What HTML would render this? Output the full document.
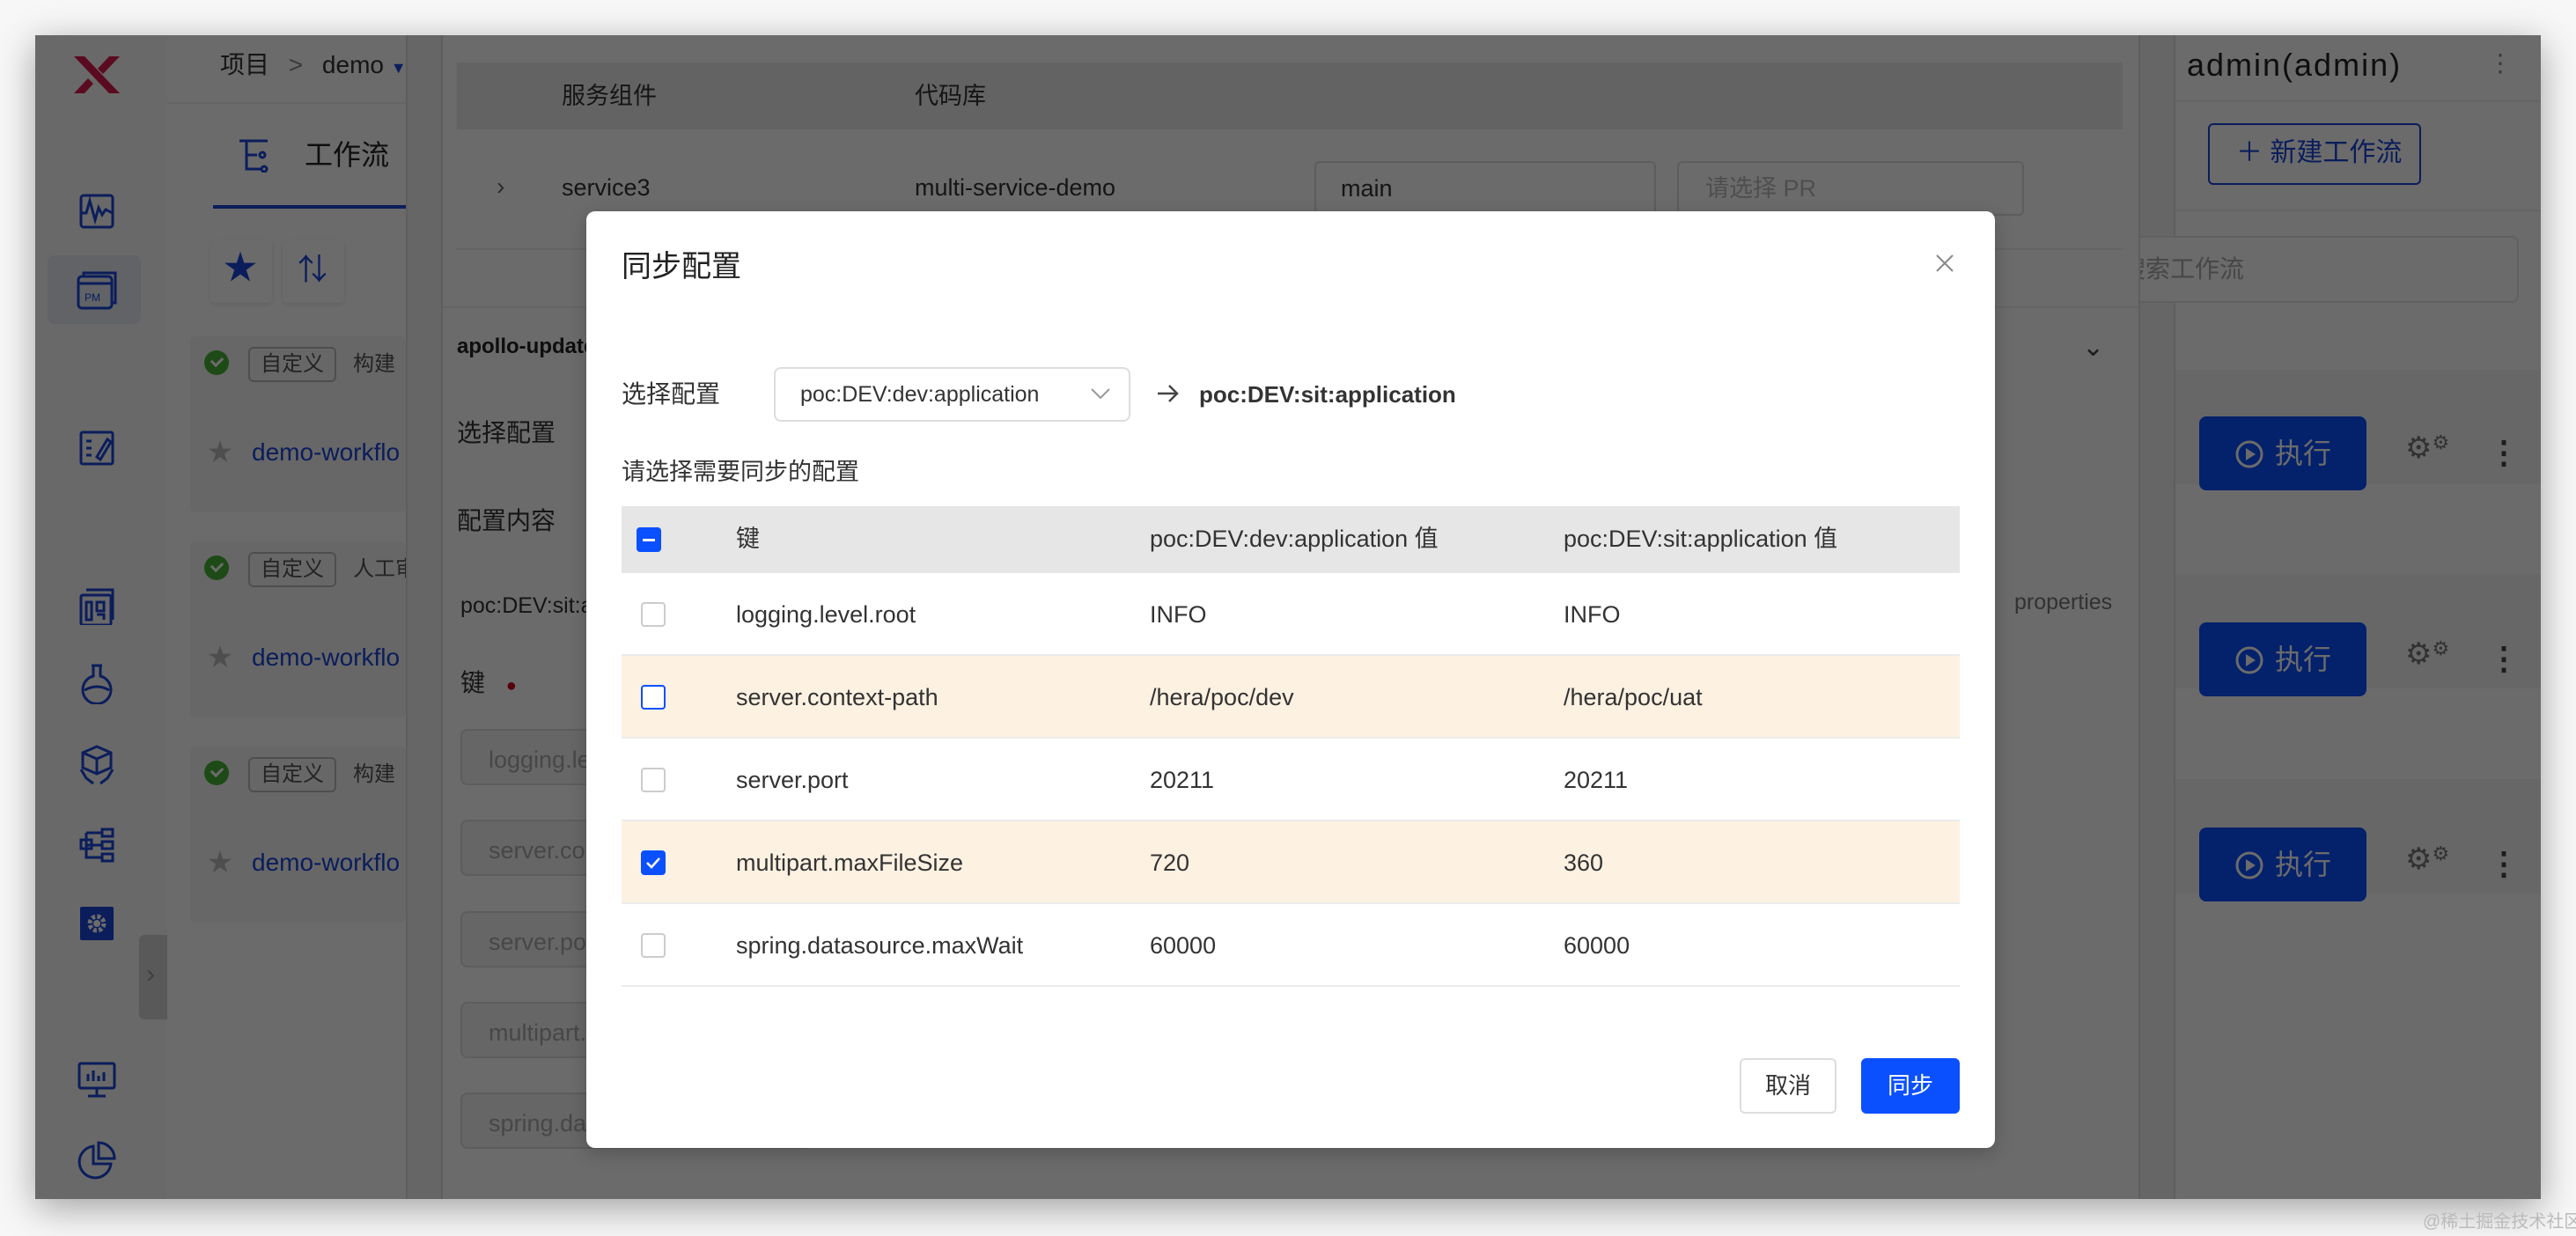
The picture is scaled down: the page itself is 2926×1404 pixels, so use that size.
<!DOCTYPE html>
<html><head><meta charset="utf-8">
<style>
*{margin:0;padding:0;box-sizing:border-box}
body{width:2926px;height:1404px;background:#f7f7f7;position:relative;overflow:hidden;font-family:"Liberation Sans","Noto Sans CJK SC",sans-serif;color:#333}
.a{position:absolute}
.win{left:40px;top:40px;width:2846px;height:1322px;background:#fff;box-shadow:0 10px 40px rgba(0,0,0,.35);overflow:hidden}
.t{position:absolute;white-space:nowrap;line-height:1}
.ic{position:absolute;fill:none;stroke:#1b46d8;stroke-width:3}
.card{position:absolute;left:74px;width:400px;height:200px;background:#f6f6f6;border-radius:6px}
.tag{position:absolute;border:2px solid #bbb;border-radius:6px;color:#555;font-size:24px;padding:6px 12px;line-height:1}
.ok{position:absolute;width:28px;height:28px;border-radius:50%;background:#45b035}
.ok:after{content:"";position:absolute;left:8px;top:7px;width:10px;height:6px;border-left:3px solid #fff;border-bottom:3px solid #fff;transform:rotate(-45deg)}
.link{color:#1b46d8;font-size:28px}
.inp{position:absolute;left:483px;width:400px;height:64px;border:2px solid #ddd;border-radius:8px;background:#f4f4f4;color:#aaa;font-size:27px;padding:18px 30px}
.exe{position:absolute;left:2458px;width:190px;height:84px;background:#0a50ff;border-radius:8px;color:#fff;font-size:32px}
.ov{left:0;top:0;width:2846px;height:1322px;background:rgba(0,0,0,.58)}
.modal{left:666px;top:240px;width:1600px;height:1064px;background:#fff;border-radius:10px;box-shadow:0 6px 20px rgba(0,0,0,.2)}
.row{position:absolute;left:40px;width:1520px;height:94px;border-bottom:2px solid #ececec}
.row .t{top:34px;font-size:27px;color:#333}
.cb{position:absolute;left:22px;top:33px;width:28px;height:28px;border:2px solid #ccc;border-radius:4px;background:#fff}
</style></head><body>
<div class="a win">
 <!-- left nav -->
 <div class="a" style="left:0;top:0;width:150px;height:1322px;background:#fafafa"></div>
 <svg class="a" style="left:42px;top:22px" width="56" height="46" viewBox="0 0 56 46"><path d="M2 2 L14 2 L54 44 L42 44 Z" fill="#d81b50"/><path d="M54 2 L42 2 L29 16 L35 22 Z M2 44 L14 44 L24 33 L18 27 Z" fill="#d81b50"/></svg>
 <svg class="ic" style="left:50px;top:180px" width="40" height="40" viewBox="0 0 40 40"><rect x="2" y="2" width="36" height="36" rx="3"/><path d="M2 22 L8 22 L12 8 L18 30 L22 16 L26 24 L30 18 L38 22"/></svg>
 <div class="a" style="left:14px;top:250px;width:106px;height:78px;background:#e8ecf5;border-radius:8px"></div>
 <svg class="ic" style="left:47px;top:266px" width="46" height="46" viewBox="0 0 46 46"><rect x="2" y="8" width="38" height="36" rx="4"/><path d="M8 8 V4 H44 V38 H40"/><path d="M2 16 H40"/><text x="9" y="36" font-size="12" fill="#1b46d8" stroke="none" font-family="Liberation Sans">PM</text></svg>
 <svg class="ic" style="left:50px;top:449px" width="40" height="40" viewBox="0 0 40 40"><rect x="2" y="2" width="36" height="36" rx="2"/><path d="M8 12 H14 M8 20 H14 M8 28 H14 M20 30 L32 10 L36 13 L24 33 Z"/></svg>
 <svg class="ic" style="left:48px;top:628px" width="42" height="42" viewBox="0 0 42 42"><rect x="4" y="8" width="34" height="34" rx="2"/><path d="M10 2 H40 V36 M10 16 H16 V36 H10 Z M22 16 H30 V26 H22 Z M22 30 H30 V36"/></svg>
 <svg class="ic" style="left:52px;top:714px" width="36" height="46" viewBox="0 0 36 46"><path d="M12 2 H24 M14 2 V14 A16 16 0 1 0 22 14 V2 M4 30 Q18 22 32 30"/></svg>
 <svg class="ic" style="left:48px;top:806px" width="44" height="46" viewBox="0 0 44 46"><path d="M22 2 L38 9 V26 L22 33 L6 26 V9 Z M6 9 L22 16 L38 9 M22 16 V33 M4 28 L10 38 L18 44 M40 28 L34 38 L26 44"/></svg>
 <svg class="ic" style="left:50px;top:900px" width="40" height="40" viewBox="0 0 40 40"><rect x="2" y="14" width="12" height="10"/><rect x="26" y="2" width="12" height="8"/><rect x="26" y="16" width="12" height="8"/><rect x="26" y="30" width="12" height="8"/><path d="M8 6 V34 H26 M8 20 H26 M8 6 H26"/></svg>
 <div class="a" style="left:51px;top:990px;width:38px;height:38px;background:#1b46d8;border-radius:2px"></div>
 <svg class="a" style="left:57px;top:996px" width="26" height="26" viewBox="0 0 26 26"><circle cx="13" cy="13" r="8" fill="none" stroke="#fff" stroke-width="5" stroke-dasharray="4 2.3"/><circle cx="13" cy="13" r="4" fill="#fff"/></svg>
 <svg class="ic" style="left:48px;top:1166px" width="44" height="42" viewBox="0 0 44 42"><rect x="2" y="2" width="40" height="28" rx="2"/><path d="M22 30 V38 M12 39 H32 M12 22 V14 M18 22 V10 M24 22 V16 M30 22 V12"/></svg>
 <svg class="ic" style="left:48px;top:1256px" width="44" height="44" viewBox="0 0 44 44"><path d="M18 6 A18 18 0 1 0 38 26 H18 Z M24 2 A18 18 0 0 1 42 20 H24 Z"/></svg>
 <div class="a" style="left:118px;top:1022px;width:32px;height:96px;background:#d4d4d4;border-radius:6px 0 0 6px"></div>
 <div class="t" style="left:126px;top:1052px;font-size:30px;color:#999">›</div>
 <!-- list column -->
 <div class="a" style="left:150px;top:0;width:271px;height:1322px;background:#fff"></div>
 <div class="t" style="left:210px;top:20px;font-size:28px">项目 <span style="color:#888;margin:0 14px">&gt;</span> demo <span style="color:#1b46d8;font-size:18px">▼</span></div>
 <div class="a" style="left:150px;top:76px;width:271px;height:2px;background:#eee"></div>
 <svg class="ic" style="left:230px;top:118px" width="36" height="38" viewBox="0 0 36 38"><path d="M2 2 H34 M10 2 V34 H26 M10 18 H22"/><circle cx="28" cy="18" r="3"/><circle cx="30" cy="34" r="3"/></svg>
 <div class="t" style="left:306px;top:120px;font-size:32px;color:#222">工作流</div>
 <div class="a" style="left:202px;top:193px;width:219px;height:4px;background:#1b46d8"></div>
 <div class="a" style="left:199px;top:232px;width:70px;height:72px;background:#fff;box-shadow:0 2px 6px rgba(0,0,0,.1);border-radius:6px"></div>
 <div class="t" style="left:214px;top:246px;font-size:38px;color:#1b46d8">★</div>
 <div class="a" style="left:281px;top:232px;width:70px;height:72px;background:#fff;box-shadow:0 2px 6px rgba(0,0,0,.1);border-radius:6px"></div>
 <div class="t" style="left:298px;top:250px;font-size:34px;color:#1b46d8">⇅</div>
 <div class="card" style="left:176px;top:342px;width:245px"></div>
 <div class="ok" style="left:192px;top:358px"></div><div class="tag" style="left:242px;top:354px">自定义</div><div class="t" style="left:361px;top:362px;font-size:24px;color:#555">构建</div>
 <div class="t" style="left:196px;top:460px;font-size:28px;color:#bbb">★</div><div class="t link" style="left:246px;top:460px">demo-workflo</div>
 <div class="card" style="left:176px;top:575px;width:245px"></div>
 <div class="ok" style="left:192px;top:591px"></div><div class="tag" style="left:242px;top:587px">自定义</div><div class="t" style="left:361px;top:595px;font-size:24px;color:#555">人工审</div>
 <div class="t" style="left:196px;top:693px;font-size:28px;color:#bbb">★</div><div class="t link" style="left:246px;top:693px">demo-workflo</div>
 <div class="card" style="left:176px;top:808px;width:245px"></div>
 <div class="ok" style="left:192px;top:824px"></div><div class="tag" style="left:242px;top:820px">自定义</div><div class="t" style="left:361px;top:828px;font-size:24px;color:#555">构建</div>
 <div class="t" style="left:196px;top:926px;font-size:28px;color:#bbb">★</div><div class="t link" style="left:246px;top:926px">demo-workflo</div>
 <!-- strips -->
 <div class="a" style="left:421px;top:0;width:42px;height:1322px;background:#f2f2f2;border-left:2px solid #e0e0e0;border-right:2px solid #e0e0e0"></div>
 <div class="a" style="left:2389px;top:0;width:42px;height:1322px;background:#f2f2f2;border-left:2px solid #e0e0e0;border-right:2px solid #e0e0e0"></div>
 <!-- right panel -->
 <div class="a" style="left:2431px;top:0;width:415px;height:1322px;background:#fff"></div>
 <div class="t" style="left:2444px;top:16px;font-size:36px;letter-spacing:2px;color:#222">admin(admin)</div>
 <div class="t" style="left:2786px;top:18px;font-size:28px;color:#888">⋮</div>
 <div class="a" style="left:2431px;top:74px;width:415px;height:2px;background:#eee"></div>
 <div class="a" style="left:2468px;top:100px;width:242px;height:70px;border:2px solid #1b46d8;border-radius:6px;color:#1b46d8;font-size:30px;padding:17px 0 0 30px;line-height:1">＋ 新建工作流</div>
 <div class="a" style="left:2431px;top:198px;width:415px;height:2px;background:#eee"></div>
 <div class="a" style="left:2391px;top:228px;width:430px;height:76px;overflow:hidden">
  <div class="a" style="left:-40px;top:0;width:470px;height:76px;border:2px solid #e4e4e4;border-radius:8px;background:#fff"></div>
  <div class="t" style="left:-22px;top:24px;font-size:28px;color:#aaa">搜索工作流</div>
 </div>
 <div class="a" style="left:2431px;top:380px;width:415px;height:130px;background:#f6f6f6"></div>
 <div class="a" style="left:2431px;top:612px;width:415px;height:130px;background:#f6f6f6"></div>
 <div class="a" style="left:2431px;top:845px;width:415px;height:130px;background:#f6f6f6"></div>
 <div class="exe" style="top:433px"><svg class="a" style="left:40px;top:26px" width="34" height="34" viewBox="0 0 34 34"><circle cx="17" cy="17" r="14" fill="none" stroke="#fff" stroke-width="3"/><path d="M13 10 L24 17 L13 24 Z" fill="#fff"/></svg><span class="t" style="left:86px;top:26px">执行</span></div>
 <div class="exe" style="top:667px"><svg class="a" style="left:40px;top:26px" width="34" height="34" viewBox="0 0 34 34"><circle cx="17" cy="17" r="14" fill="none" stroke="#fff" stroke-width="3"/><path d="M13 10 L24 17 L13 24 Z" fill="#fff"/></svg><span class="t" style="left:86px;top:26px">执行</span></div>
 <div class="exe" style="top:900px"><svg class="a" style="left:40px;top:26px" width="34" height="34" viewBox="0 0 34 34"><circle cx="17" cy="17" r="14" fill="none" stroke="#fff" stroke-width="3"/><path d="M13 10 L24 17 L13 24 Z" fill="#fff"/></svg><span class="t" style="left:86px;top:26px">执行</span></div>
 <div class="t" style="left:2692px;top:452px;font-size:34px;color:#777">⚙<span style="font-size:22px;vertical-align:top">⚙</span></div>
 <div class="t" style="left:2692px;top:686px;font-size:34px;color:#777">⚙<span style="font-size:22px;vertical-align:top">⚙</span></div>
 <div class="t" style="left:2692px;top:919px;font-size:34px;color:#777">⚙<span style="font-size:22px;vertical-align:top">⚙</span></div>
 <div class="t" style="left:2786px;top:456px;font-size:36px;color:#444;font-weight:bold">⋮</div>
 <div class="t" style="left:2786px;top:690px;font-size:36px;color:#444;font-weight:bold">⋮</div>
 <div class="t" style="left:2786px;top:923px;font-size:36px;color:#444;font-weight:bold">⋮</div>
 <!-- drawer -->
 <div class="a" style="left:463px;top:0;width:1926px;height:1322px;background:#fff"></div>
 <div class="a" style="left:479px;top:31px;width:1892px;height:76px;background:#ececec"></div>
 <div class="t" style="left:598px;top:56px;font-size:27px">服务组件</div>
 <div class="t" style="left:999px;top:56px;font-size:27px">代码库</div>
 <div class="t" style="left:524px;top:158px;font-size:28px;color:#666">›</div>
 <div class="t" style="left:598px;top:160px;font-size:27px">service3</div>
 <div class="t" style="left:999px;top:160px;font-size:27px">multi-service-demo</div>
 <div class="a" style="left:1453px;top:143px;width:388px;height:62px;border:2px solid #ddd;border-radius:6px"></div>
 <div class="t" style="left:1483px;top:161px;font-size:27px">main</div>
 <div class="a" style="left:1865px;top:143px;width:394px;height:62px;border:2px solid #ddd;border-radius:6px"></div>
 <div class="t" style="left:1897px;top:161px;font-size:27px;color:#bbb">请选择 PR</div>
 <div class="a" style="left:479px;top:242px;width:1892px;height:2px;background:#eee"></div>
 <div class="a" style="left:463px;top:308px;width:1926px;height:2px;background:#eee"></div>
 <div class="t" style="left:479px;top:342px;font-size:24px;font-weight:bold;color:#222">apollo-update</div>
 <div class="t" style="left:2325px;top:340px;font-size:30px;color:#444">⌄</div>
 <div class="t" style="left:479px;top:438px;font-size:28px">选择配置</div>
 <div class="t" style="left:479px;top:538px;font-size:28px">配置内容</div>
 <div class="t" style="left:483px;top:636px;font-size:25px">poc:DEV:sit:application</div>
 <div class="t" style="left:2248px;top:632px;font-size:25px;color:#777">properties</div>
 <div class="t" style="left:483px;top:722px;font-size:28px">键 <span style="color:#d0021b;font-size:20px;margin-left:16px">●</span></div>
 <div class="inp" style="top:788px">logging.level.root</div>
 <div class="inp" style="top:891px">server.context-path</div>
 <div class="inp" style="top:995px">server.port</div>
 <div class="inp" style="top:1098px">multipart.maxFileSize</div>
 <div class="inp" style="top:1201px">spring.datasource.maxWait</div>
 <div class="a ov"></div>
</div>

<div class="a modal">
 <div class="t" style="left:40px;top:46px;font-size:34px;color:#222">同步配置</div>
 <svg class="a" style="left:1532px;top:48px" width="22" height="22" viewBox="0 0 22 22"><path d="M2 2 L20 20 M20 2 L2 20" stroke="#888" stroke-width="2"/></svg>
 <div class="t" style="left:40px;top:194px;font-size:28px">选择配置</div>
 <div class="a" style="left:213px;top:177px;width:405px;height:62px;border:2px solid #ddd;border-radius:8px"></div>
 <div class="t" style="left:243px;top:196px;font-size:25px;color:#333">poc:DEV:dev:application</div>
 <svg class="a" style="left:573px;top:200px" width="22" height="14" viewBox="0 0 22 14"><path d="M1 2 L11 12 L21 2" fill="none" stroke="#999" stroke-width="2"/></svg>
 <svg class="a" style="left:647px;top:196px" width="26" height="22" viewBox="0 0 26 22"><path d="M2 11 H24 M15 2 L24 11 L15 20" fill="none" stroke="#444" stroke-width="2.5"/></svg>
 <div class="t" style="left:696px;top:195px;font-size:26px;font-weight:bold;color:#333">poc:DEV:sit:application</div>
 <div class="t" style="left:40px;top:283px;font-size:27px">请选择需要同步的配置</div>
 <div class="a" style="left:40px;top:335px;width:1520px;height:76px;background:#e6e6e6"></div>
 <div class="a" style="left:57px;top:359px;width:28px;height:28px;background:#0a50ff;border-radius:4px"></div>
 <div class="a" style="left:64px;top:372px;width:14px;height:3px;background:#fff"></div>
 <div class="t" style="left:170px;top:359px;font-size:27px">键</div>
 <div class="t" style="left:640px;top:359px;font-size:27px">poc:DEV:dev:application 值</div>
 <div class="t" style="left:1110px;top:359px;font-size:27px">poc:DEV:sit:application 值</div>
 <div class="row" style="top:411px"><div class="cb"></div><div class="t" style="left:130px">logging.level.root</div><div class="t" style="left:600px">INFO</div><div class="t" style="left:1070px">INFO</div></div>
 <div class="row" style="top:505px;background:#fdf1e2"><div class="cb" style="border-color:#0a50ff"></div><div class="t" style="left:130px">server.context-path</div><div class="t" style="left:600px">/hera/poc/dev</div><div class="t" style="left:1070px">/hera/poc/uat</div></div>
 <div class="row" style="top:599px"><div class="cb"></div><div class="t" style="left:130px">server.port</div><div class="t" style="left:600px">20211</div><div class="t" style="left:1070px">20211</div></div>
 <div class="row" style="top:693px;background:#fdf1e2"><div class="cb" style="background:#0a50ff;border-color:#0a50ff"></div><svg class="a" style="left:27px;top:40px" width="18" height="14" viewBox="0 0 18 14"><path d="M2 7 L7 12 L16 2" fill="none" stroke="#fff" stroke-width="2.5"/></svg><div class="t" style="left:130px">multipart.maxFileSize</div><div class="t" style="left:600px">720</div><div class="t" style="left:1070px">360</div></div>
 <div class="row" style="top:787px"><div class="cb"></div><div class="t" style="left:130px">spring.datasource.maxWait</div><div class="t" style="left:600px">60000</div><div class="t" style="left:1070px">60000</div></div>
 <div class="a" style="left:1310px;top:962px;width:110px;height:63px;border:2px solid #ddd;border-radius:6px;font-size:26px;color:#333;text-align:center;line-height:59px">取消</div>
 <div class="a" style="left:1448px;top:962px;width:112px;height:63px;background:#0a50ff;border-radius:6px;font-size:26px;color:#fff;text-align:center;line-height:63px">同步</div>
</div>
<div class="t" style="left:2752px;top:1378px;font-size:20px;color:#bbb">@稀土掘金技术社区</div>
</body></html>
